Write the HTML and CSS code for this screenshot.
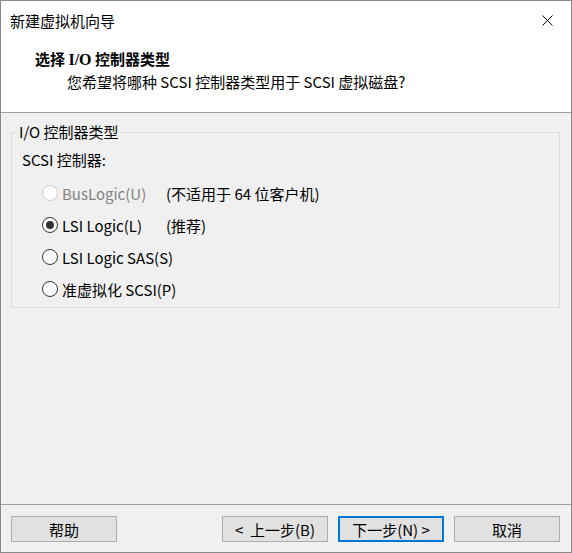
FILE: index.html
```html
<!DOCTYPE html>
<html lang="zh-CN">
<head>
    <meta charset="UTF-8">
    <title>新建虚拟机向导</title>
    <link rel="stylesheet" href="styles.css">
</head>
<body>

<div class="window">
    <div class="header">
        <div class="titlebar">
            <span class="title">新建虚拟机向导</span>
            <span class="close">
                <svg width="11" height="11" viewBox="0 0 11 11">
                    <path d="M0.5 0.5 L10.5 10.5 M10.5 0.5 L0.5 10.5" stroke="#000" stroke-width="1" fill="none"/>
                </svg>
            </span>
        </div>
        <div class="heading">选择 <span class="latin">I/O</span> 控制器类型</div>
        <div class="subtitle">您希望将哪种 SCSI 控制器类型用于 SCSI 虚拟磁盘?</div>
    </div>

    <div class="content">
        <fieldset class="group">
            <legend>I/O 控制器类型</legend>
            <div class="group-label">SCSI 控制器:</div>
            <div class="options">
                <label class="option disabled">
                    <span class="radio"></span>
                    <span>BusLogic(U)</span>
                </label>
                <span class="note">(不适用于 64 位客户机)</span>

                <label class="option">
                    <span class="radio checked"></span>
                    <span>LSI Logic(L)</span>
                </label>
                <span class="note">(推荐)</span>

                <label class="option">
                    <span class="radio"></span>
                    <span>LSI Logic SAS(S)</span>
                </label>
                <span></span>

                <label class="option">
                    <span class="radio"></span>
                    <span>准虚拟化 SCSI(P)</span>
                </label>
                <span></span>
            </div>
        </fieldset>
    </div>

    <div class="footer">
        <button class="btn">帮助</button>
        <button class="btn push">&lt;&nbsp; 上一步(B)</button>
        <button class="btn default">下一步(N) &gt;</button>
        <button class="btn">取消</button>
    </div>
</div>

</body>
</html>
```

FILE: styles.css
```css
html, body {
    margin: 0;
    height: 100%;
    overflow: hidden;
}

body {
    font-family: "Noto Sans CJK SC", sans-serif;
    font-size: 15px;
    color: #000;
    background-color: #f0f0f0;
}

.window {
    box-sizing: border-box;
    width: 572px;
    height: 553px;
    border: 1px solid #8a8a8a;
    display: flex;
    flex-direction: column;
    background-color: #f0f0f0;
}

.header {
    background-color: #fff;
    height: 111px;
    border-bottom: 1px solid #a0a0a0;
}

.titlebar {
    height: 39px;
    line-height: 39px;
    display: flex;
    justify-content: space-between;
    align-items: center;
    padding-left: 9px;
}

.close {
    width: 46px;
    height: 39px;
    display: flex;
    align-items: center;
    justify-content: center;
    margin-right: 1px;
}

.close svg {
    display: block;
}

.heading {
    margin-top: 8px;
    padding-left: 34px;
    line-height: 22px;
    font-weight: bold;
}

.heading .latin {
    font-family: "Liberation Serif", serif;
    font-size: 16px;
}

.subtitle {
    padding-left: 66px;
    line-height: 22px;
}

.content {
    flex: 1;
    padding: 9px 11px 0 10px;
}

.group {
    margin: 0;
    padding: 0 0 2px 0;
    border: 1px solid #dcdcdc;
}

.group legend {
    margin-left: 5px;
    padding: 0 2px;
    line-height: 20px;
}

.group-label {
    padding-left: 10px;
    line-height: 22px;
    margin-top: 7px;
}

.options {
    display: grid;
    grid-template-columns: 124px auto;
    grid-auto-rows: 32px;
    align-items: center;
    padding-left: 30px;
    margin-top: 6px;
}

.option {
    display: flex;
    align-items: center;
    gap: 4px;
    white-space: nowrap;
}

.option.disabled {
    color: #838383;
}

.radio {
    box-sizing: border-box;
    flex: none;
    width: 16px;
    height: 16px;
    border: 1px solid #333;
    border-radius: 50%;
    background-color: #fff;
    display: flex;
    align-items: center;
    justify-content: center;
}

.option.disabled .radio {
    border-color: #cccccc;
}

.radio.checked::after {
    content: "";
    width: 8px;
    height: 8px;
    border-radius: 50%;
    background-color: #333;
}

.footer {
    border-top: 1px solid #a0a0a0;
    padding: 11px 11px 10px 10px;
    display: flex;
    gap: 10px;
}

.btn {
    box-sizing: border-box;
    width: 106px;
    height: 26px;
    margin: 0;
    padding: 0;
    font-family: "Noto Sans CJK SC", sans-serif;
    font-size: 15px;
    color: #000;
    background-color: #e1e1e1;
    border: 1px solid #adadad;
}

.btn.push {
    margin-left: auto;
}

.btn.default {
    border: 2px solid #0078d7;
}
```
